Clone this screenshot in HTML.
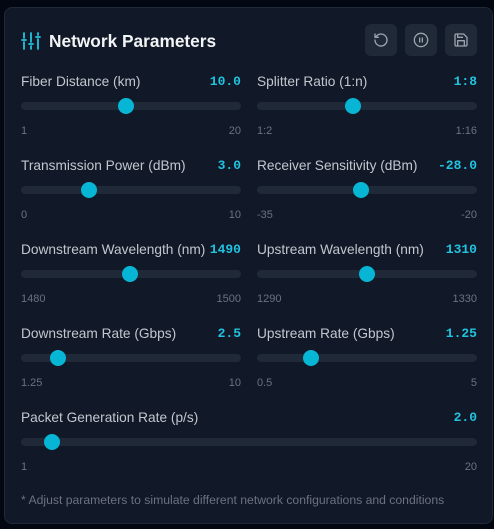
<!DOCTYPE html>
<html><head><meta charset="utf-8"><style>
*{margin:0;padding:0;box-sizing:border-box}
body{width:494px;height:529px;background:#030712;font-family:"Liberation Sans",sans-serif;position:relative;overflow:hidden}
.card{position:absolute;left:4px;top:7px;width:489px;height:517px;background:#111827;border:1px solid #1f2937;border-radius:8px}
.title{position:absolute;left:49px;top:31px;font-size:17.3px;font-weight:bold;color:#f3f4f6}
.btn{position:absolute;top:24px;width:32px;height:32px;background:#1f2937;border-radius:6px;display:flex;align-items:center;justify-content:center}
.lbl{position:absolute;font-size:13.7px;color:#c2c7cf;line-height:16px}
.val{position:absolute;font-family:"Liberation Mono",monospace;font-weight:bold;font-size:13px;color:#22c3e0;line-height:16px;text-align:right}
.trk{position:absolute;height:8px;background:#1f2937;border-radius:4px}
.th{position:absolute;width:16px;height:16px;border-radius:50%;background:#06b6d4}
.mm{position:absolute;font-size:11px;color:#6b7280;line-height:14px}
.foot{position:absolute;left:21px;top:493px;font-size:12.2px;color:#6b7280}
</style></head><body>
<div class="card"></div>
<svg style="position:absolute;left:21px;top:31px" width="20" height="20" viewBox="0 0 20 20" fill="none" stroke="#22c3e0" stroke-width="1.8" stroke-linecap="round"><path d="M3 2v5M3 11v7M10 2v9M10 15v3M17 2v2M17 8v10M1 9h4M8 13h4M15 6h4"/></svg>
<div class="title">Network Parameters</div>
<div class="btn" style="left:365px"><svg width="16" height="16" viewBox="0 0 24 24" fill="none" stroke="#9ca3af" stroke-width="2" stroke-linecap="round" stroke-linejoin="round"><path d="M3 12a9 9 0 1 0 3-6.7L3 8"/><path d="M3 3v5h5"/></svg></div>
<div class="btn" style="left:405px"><svg width="16" height="16" viewBox="0 0 24 24" fill="none" stroke="#9ca3af" stroke-width="2" stroke-linecap="round"><circle cx="12" cy="12" r="10"/><path d="M10 15V9M14 15V9"/></svg></div>
<div class="btn" style="left:445px"><svg width="16" height="16" viewBox="0 0 24 24" fill="none" stroke="#9ca3af" stroke-width="2" stroke-linejoin="round"><path d="M19 21H5a2 2 0 0 1-2-2V5a2 2 0 0 1 2-2h11l5 5v11a2 2 0 0 1-2 2z"/><path d="M17 21v-8H7v8M7 3v5h8"/></svg></div>

<div id="s"></div>
<script>
var rows=[
[21,220,74,"Fiber Distance (km)","10.0",126,"1","20"],
[257,220,74,"Splitter Ratio (1:n)","1:8",353,"1:2","1:16"],
[21,220,158,"Transmission Power (dBm)","3.0",89,"0","10"],
[257,220,158,"Receiver Sensitivity (dBm)","-28.0",361,"-35","-20"],
[21,220,242,"Downstream Wavelength (nm)","1490",130,"1480","1500"],
[257,220,242,"Upstream Wavelength (nm)","1310",367,"1290","1330"],
[21,220,326,"Downstream Rate (Gbps)","2.5",58,"1.25","10"],
[257,220,326,"Upstream Rate (Gbps)","1.25",311,"0.5","5"],
[21,456,410,"Packet Generation Rate (p/s)","2.0",52,"1","20"]];
var h="";
rows.forEach(function(r){var x=r[0],w=r[1],y=r[2];
h+='<div class="lbl" style="left:'+x+'px;top:'+y+'px">'+r[3]+'</div>';
h+='<div class="val" style="left:'+x+'px;width:'+w+'px;top:'+y+'px">'+r[4]+'</div>';
h+='<div class="trk" style="left:'+x+'px;width:'+w+'px;top:'+(y+28)+'px"></div>';
h+='<div class="th" style="left:'+(r[5]-8)+'px;top:'+(y+24)+'px"></div>';
h+='<div class="mm" style="left:'+x+'px;top:'+(y+50)+'px">'+r[6]+'</div>';
h+='<div class="mm" style="left:'+x+'px;width:'+w+'px;text-align:right;top:'+(y+50)+'px">'+r[7]+'</div>';});
document.getElementById("s").innerHTML=h;
</script>
<div class="foot">* Adjust parameters to simulate different network configurations and conditions</div>
</body></html>
